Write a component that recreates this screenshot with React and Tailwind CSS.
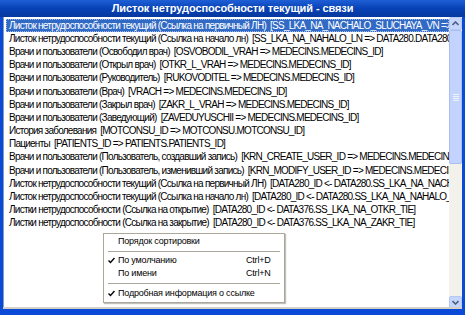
import React from 'react'

const ROWS = [
  'Листок нетрудоспособности текущий (Ссылка на первичный ЛН)  [SS_LKA_NA_NACHALO_SLUCHAYA_VN => DATA280.DATA280_ID]',
  'Листок нетрудоспособности текущий (Ссылка на начало лн)  [SS_LKA_NA_NAHALO_LN => DATA280.DATA280_ID]',
  'Врачи и пользователи (Освободил врач)  [OSVOBODIL_VRAH => MEDECINS.MEDECINS_ID]',
  'Врачи и пользователи (Открыл врач)  [OTKR_L_VRAH => MEDECINS.MEDECINS_ID]',
  'Врачи и пользователи (Руководитель)  [RUKOVODITEL => MEDECINS.MEDECINS_ID]',
  'Врачи и пользователи (Врач)  [VRACH => MEDECINS.MEDECINS_ID]',
  'Врачи и пользователи (Закрыл врач)  [ZAKR_L_VRAH => MEDECINS.MEDECINS_ID]',
  'Врачи и пользователи (Заведующий)  [ZAVEDUYUSCHII => MEDECINS.MEDECINS_ID]',
  'История заболевания  [MOTCONSU_ID => MOTCONSU.MOTCONSU_ID]',
  'Пациенты  [PATIENTS_ID => PATIENTS.PATIENTS_ID]',
  'Врачи и пользователи (Пользователь, создавший запись)  [KRN_CREATE_USER_ID => MEDECINS.MEDECINS_ID]',
  'Врачи и пользователи (Пользователь, изменивший запись)  [KRN_MODIFY_USER_ID => MEDECINS.MEDECINS_ID]',
  'Листок нетрудоспособности текущий (Ссылка на первичный ЛН)  [DATA280_ID <- DATA280.SS_LKA_NA_NACHALO_SLUCHAYA_VN]',
  'Листок нетрудоспособности текущий (Ссылка на начало лн)  [DATA280_ID <- DATA280.SS_LKA_NA_NAHALO_LN]',
  'Листки нетрудоспособности (Ссылка на открытие)  [DATA280_ID <- DATA376.SS_LKA_NA_OTKR_TIE]',
  'Листки нетрудоспособности (Ссылка на закрытие)  [DATA280_ID <- DATA376.SS_LKA_NA_ZAKR_TIE]',
]

const SANS = { fontFamily: '"Liberation Sans", Arial, sans-serif' }

function Arrow({ up }) {
  return (
    <svg width="7" height="5" viewBox="0 0 7 5" aria-hidden="true">
      <path
        d={up ? 'M0.5 4 L3.5 1 L6.5 4' : 'M0.5 1 L3.5 4 L6.5 1'}
        fill="none"
        stroke="#4d6185"
        strokeWidth="1.6"
      />
    </svg>
  )
}

function Check() {
  return (
    <svg width="7" height="7" viewBox="0 0 7 7" aria-hidden="true">
      <path d="M0.5 3.5 L2.5 5.5 L6.5 1" fill="none" stroke="#000" strokeWidth="1.4" />
    </svg>
  )
}

function MenuItem({ checked, label, shortcut }) {
  return (
    <div className="h-[13px] flex items-center text-[9px] tracking-[-0.2px] text-black leading-none">
      <span className="w-[14px] flex justify-center">{checked && <Check />}</span>
      <span className="flex-1">{label}</span>
      {shortcut && <span className="w-[38px]">{shortcut}</span>}
    </div>
  )
}

function Sep({ h }) {
  return (
    <div className={'flex items-center px-[4px] ' + h}>
      <div className="flex-1 h-px bg-[#aca899]" />
    </div>
  )
}

export default function App() {
  return (
    <div className="w-[465px] h-[315px] bg-[#0a4ad6] flex flex-col overflow-hidden relative" style={SANS}>
      {/* title */}
      <div className="h-[17px] flex items-center justify-center bg-gradient-to-b from-[#1e5fd6] via-[#0842b5] to-[#06389f] text-white text-[11px] font-bold tracking-[-0.1px]">
        Листок нетрудоспособности текущий - связи
      </div>

      <div className="flex-1 flex mx-[3px] mb-[6px] border-l border-[#7f9db9] bg-white">
        <div className="flex-1 pt-[2px] pl-[2px] overflow-hidden">
          {ROWS.map((r, i) => (
            <div
              key={i}
              className={
                'h-[13.2px] flex items-center whitespace-pre text-[10px] tracking-[-0.75px] leading-none pl-[3px] ' +
                (i === 0 ? 'bg-[#316ac5] text-white outline-1 outline-dotted outline-[#9fb8e6] -outline-offset-1' : 'text-black')
              }
            >
              {r}
            </div>
          ))}
        </div>

        {/* scrollbar */}
        <div className="w-[13px] bg-[#f3f1ec] flex flex-col">
          <div className="h-[13px] bg-[#c6d6fb] border border-[#b4c8f6] rounded-[2px] flex items-center justify-center">
            <Arrow up />
          </div>
          <div className="h-[134px] bg-[#c3d3fd] border border-[#a8bff5] rounded-[2px] flex items-center justify-center">
            <div className="w-[6px] flex flex-col gap-[1px]">
              <div className="h-px bg-[#eef4fe]" />
              <div className="h-px bg-[#eef4fe]" />
              <div className="h-px bg-[#eef4fe]" />
              <div className="h-px bg-[#eef4fe]" />
            </div>
          </div>
          <div className="flex-1" />
          <div className="h-[13px] bg-[#c6d6fb] border border-[#b4c8f6] rounded-[2px] flex items-center justify-center">
            <Arrow />
          </div>
        </div>
      </div>

      <div className="absolute left-[3px] right-[3px] bottom-[6px] h-[2px] bg-[#d4d0c8]" />

      {/* context menu */}
      <div className="absolute left-[103px] top-[233px] w-[182px] h-[70px] bg-white border border-[#aca899] shadow-[1px_1px_1px_rgba(0,0,0,0.25)] pt-[1px]">
        <MenuItem label="Порядок сортировки" />
        <Sep h="h-[6px]" />
        <MenuItem checked label="По умолчанию" shortcut="Ctrl+D" />
        <MenuItem label="По имени" shortcut="Ctrl+N" />
        <Sep h="h-[7px]" />
        <MenuItem checked label="Подробная информация о ссылке" />
      </div>
    </div>
  )
}
